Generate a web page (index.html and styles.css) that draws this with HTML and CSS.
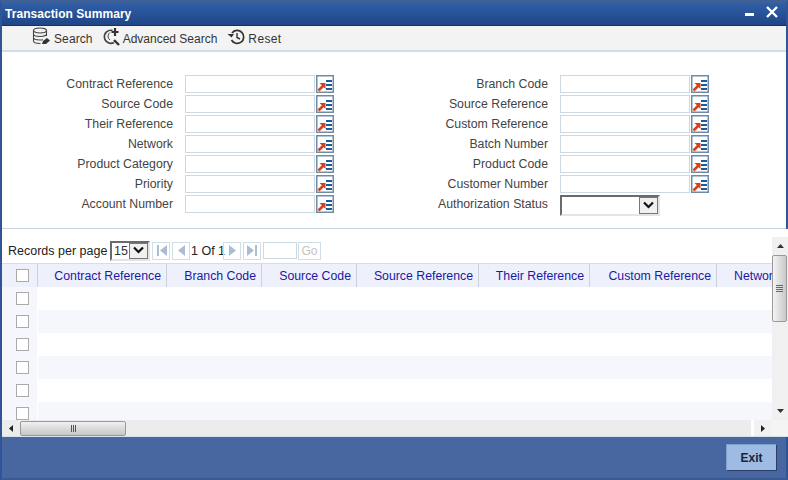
FILE: index.html
```html
<!DOCTYPE html>
<html lang="en">
<head>
<meta charset="utf-8">
<title>Transaction Summary</title>
<link rel="stylesheet" href="styles.css">
</head>
<body>
<svg class="defs" width="0" height="0">
  <symbol id="lov" viewBox="0 0 18 18">
    <rect x="0.750" y="0.750" width="16.500" height="16.500" fill="#fff" stroke="#6f8ca3" stroke-width="1.500"/>
    <path d="M2.500 15.500 L7.500 10.500" stroke="#d8401c" stroke-width="2.600"/>
    <path d="M3.500 8 H9.500 V14 Z" fill="#d8401c"/>
    <path d="M10 6h6M10 10h6M10 14h6" stroke="#1c5a9c" stroke-width="2.200"/>
  </symbol>
</svg>
<main class="window">
  <header class="titlebar">
    <h1 class="title">Transaction Summary</h1>
    <div class="winctl">
      <span class="minimize"></span>
      <svg class="close" width="12" height="12" viewBox="0 0 12 12"><path d="M1 1 L11 11 M11 1 L1 11" stroke="#fff" stroke-width="2.400"/></svg>
    </div>
  </header>
  <nav class="toolbar">
    <span class="tool tool-search">
      <svg width="19" height="20" viewBox="0 0 19 20"><g fill="none" stroke="#444" stroke-width="1.100"><ellipse cx="8" cy="3.500" rx="6.500" ry="2.500"/><path d="M1.500 3.500V14c0 1.500 3 2.500 7 2.500M14.500 3.500V9M1.500 7c0 1.500 3 2.500 6.500 2.500S14.500 8.500 14.500 7M1.500 10.500c0 1.500 3 2.500 6.500 2.500 1 0 2-.1 3-.3"/></g><path d="M10 17l1-3 4-3 3 2.500-4 3.500z" fill="#333"/></svg>
      Search
    </span>
    <span class="tool tool-adv">
      <svg width="18" height="20" viewBox="0 0 18 20"><g fill="none" stroke="#444"><path d="M9.500 3.500A6.500 6.500 0 1 0 11 15.500" stroke-width="1.600"/><path d="M7 5.500A4.500 4.500 0 0 0 7 13" stroke-width="1"/><path d="M11 13l5 5" stroke-width="2.400" stroke="#333"/><path d="M12 1v8M8.500 5h7" stroke-width="2.200" stroke="#333"/></g></svg>
      Advanced Search
    </span>
    <span class="tool tool-reset">
      <svg width="18" height="18" viewBox="0 0 18 18"><path d="M5 5A6.500 6.500 0 1 1 4.500 12" fill="none" stroke="#333" stroke-width="1.700"/><path d="M0.500 6H7L4.500 9.500z" fill="#333"/><path d="M10 5v4.500l3 1.500" fill="none" stroke="#333" stroke-width="1.400"/></svg>
      Reset
    </span>
  </nav>
  <form class="criteria">
    <div class="field"><label>Contract Reference</label><span class="input"></span><svg class="lov"><use href="#lov"/></svg></div>
    <div class="field"><label>Branch Code</label><span class="input"></span><svg class="lov"><use href="#lov"/></svg></div>
    <div class="field"><label>Source Code</label><span class="input"></span><svg class="lov"><use href="#lov"/></svg></div>
    <div class="field"><label>Source Reference</label><span class="input"></span><svg class="lov"><use href="#lov"/></svg></div>
    <div class="field"><label>Their Reference</label><span class="input"></span><svg class="lov"><use href="#lov"/></svg></div>
    <div class="field"><label>Custom Reference</label><span class="input"></span><svg class="lov"><use href="#lov"/></svg></div>
    <div class="field"><label>Network</label><span class="input"></span><svg class="lov"><use href="#lov"/></svg></div>
    <div class="field"><label>Batch Number</label><span class="input"></span><svg class="lov"><use href="#lov"/></svg></div>
    <div class="field"><label>Product Category</label><span class="input"></span><svg class="lov"><use href="#lov"/></svg></div>
    <div class="field"><label>Product Code</label><span class="input"></span><svg class="lov"><use href="#lov"/></svg></div>
    <div class="field"><label>Priority</label><span class="input"></span><svg class="lov"><use href="#lov"/></svg></div>
    <div class="field"><label>Customer Number</label><span class="input"></span><svg class="lov"><use href="#lov"/></svg></div>
    <div class="field"><label>Account Number</label><span class="input"></span><svg class="lov"><use href="#lov"/></svg></div>
    <div class="field"><label>Authorization Status</label>
      <span class="select"><span class="select-value"></span><span class="select-btn"><svg width="13" height="9" viewBox="0 0 13 9"><path d="M2 1.500l4.500 4.500L11 1.500" fill="none" stroke="#111" stroke-width="2.200"/></svg></span></span>
    </div>
  </form>
  <section class="results">
    <div class="results-main">
      <div class="pager">
        <span class="pager-label">Records per page</span>
        <span class="select select-small"><span class="select-value">15</span><span class="select-btn"><svg width="13" height="9" viewBox="0 0 13 9"><path d="M2 1.500l4.500 4.500L11 1.500" fill="none" stroke="#111" stroke-width="2.200"/></svg></span></span>
        <span class="page-btn"><svg width="13" height="13" viewBox="0 0 13 13"><path d="M2 1h2v11H2zM12 1v11L5 6.500z" fill="#a9bdd4"/></svg></span>
        <span class="page-btn"><svg width="13" height="13" viewBox="0 0 13 13"><path d="M10 1v11L3 6.500z" fill="#a9bdd4"/></svg></span>
        <span class="page-count">1 Of 1</span>
        <span class="page-btn"><svg width="13" height="13" viewBox="0 0 13 13"><path d="M3 1v11l7-5.500z" fill="#a9bdd4"/></svg></span>
        <span class="page-btn"><svg width="13" height="13" viewBox="0 0 13 13"><path d="M9 1h2v11H9zM1 1v11l7-5.500z" fill="#a9bdd4"/></svg></span>
        <span class="page-input"></span>
        <span class="go">Go</span>
      </div>
      <div class="grid">
        <div class="row head">
          <span class="cell-check"><i class="check"></i></span>
          <span class="th w1">Contract Reference</span>
          <span class="th w2">Branch Code</span>
          <span class="th w3">Source Code</span>
          <span class="th w4">Source Reference</span>
          <span class="th w5">Their Reference</span>
          <span class="th w6">Custom Reference</span>
          <span class="th w7">Network</span>
        </div>
        <div class="row"><span class="cell-check"><i class="check"></i></span></div>
        <div class="row alt"><span class="cell-check"><i class="check"></i></span></div>
        <div class="row"><span class="cell-check"><i class="check"></i></span></div>
        <div class="row alt"><span class="cell-check"><i class="check"></i></span></div>
        <div class="row"><span class="cell-check"><i class="check"></i></span></div>
        <div class="row alt"><span class="cell-check"><i class="check"></i></span></div>
      </div>
    </div>
    <div class="vscroll">
      <span class="arrow"><svg width="9" height="6" viewBox="0 0 9 6"><path d="M4.500 1L8 5H1z" fill="#333"/></svg></span>
      <span class="vthumb"><i></i><i></i><i></i><i></i></span>
      <span class="vtrack"></span>
      <span class="arrow"><svg width="9" height="6" viewBox="0 0 9 6"><path d="M1 1h7L4.500 5z" fill="#333"/></svg></span>
    </div>
  </section>
  <div class="hscroll">
    <span class="harrow"><svg width="6" height="9" viewBox="0 0 6 9"><path d="M5 1v7L1 4.500z" fill="#222"/></svg></span>
    <span class="hthumb"><i></i><i></i><i></i></span>
    <span class="htrack"></span>
    <span class="harrow harrow-end"><svg width="6" height="9" viewBox="0 0 6 9"><path d="M1 1v7l4-3.500z" fill="#222"/></svg></span>
    <span class="hcorner"></span>
  </div>
  <footer class="footer"><button class="exit" type="button">Exit</button></footer>
</main>
</body>
</html>
```
FILE: styles.css
```css
* { box-sizing: border-box; }
html, body { margin: 0; padding: 0; }
body { width: 788px; height: 480px; overflow: hidden; font-family: "Liberation Sans", Arial, sans-serif; font-size: 12px; color: #333; background: #4866a0; }
.defs { display: block; height: 0; }
.window { display: flex; flex-direction: column; width: 788px; height: 480px; border-left: 2px solid #2f5597; border-right: 2px solid #2f5597; border-bottom: 2px solid #3a5a94; border-top: 3px solid #3d6099; }
.titlebar { flex: none; height: 23px; display: flex; align-items: center; justify-content: space-between; padding: 0 8px 0 3px; background: linear-gradient(#2f5fa8, #1f4585); border-bottom: 1px solid #16315f; }
.title { margin: 0; font-size: 12px; font-weight: bold; color: #fff; letter-spacing: 0.05px; }
.winctl { display: flex; align-items: flex-start; gap: 12px; height: 20px; }
.minimize { width: 9px; height: 3px; background: #fff; margin-top: 9px; }
.close { margin-top: 2px; }
.toolbar { flex: none; height: 26px; display: flex; align-items: center; padding-left: 30px; background: #f3f3f3; border-bottom: 2px solid #d2dee6; }
.tool { display: flex; align-items: center; gap: 2px; font-size: 12px; color: #333; padding-top: 1px; }
.tool svg { margin-top: -3px; }
.tool-search { gap: 3px; letter-spacing: 0.1px; }
.tool-adv { margin-left: 10px; }
.tool-reset { margin-left: 10px; gap: 3px; letter-spacing: 0.35px; }
.criteria { flex: none; height: 177px; display: grid; grid-template-columns: 375px 1fr; grid-auto-rows: 20px; padding-top: 23px; background: #fff; border-bottom: 1px solid #c8d4e0; }
.field { display: flex; align-items: flex-start; height: 20px; }
.field label { flex: none; width: 171px; text-align: right; line-height: 18px; font-size: 12.300px; color: #444; }
.field .input { flex: none; width: 130px; height: 18px; margin-left: 12px; border: 1px solid #ccd8e2; background: #fff; }
.lov { flex: none; width: 18px; height: 18px; margin-left: 1px; }
.select { display: flex; width: 100px; height: 21px; margin-left: 12px; border: 2px solid #6b6b6b; border-right-color: #e4e4e4; border-bottom-color: #e4e4e4; background: #fff; }
.select-value { flex: 1; font-size: 12.500px; line-height: 17px; padding-left: 2px; }
.select-btn { flex: none; width: 19px; display: flex; align-items: center; justify-content: center; background: #f0f0f0; border: 1px solid #777; }
.results { flex: none; height: 191px; margin-right: -2px; display: flex; border-top: 8px solid #fff; background: #fff; }
.results-main { flex: none; width: 770px; height: 183px; overflow: hidden; }
.pager { height: 26px; display: flex; align-items: center; padding: 1px 0 0 6px; }
.pager-label { font-size: 12.500px; color: #222; width: 102px; flex: none; }
.select-small { width: 40px; height: 20px; margin: 0; flex: none; }
.select-small .select-btn { width: 19px; }
.select-small .select-value { line-height: 16px; padding-left: 2px; }
.page-btn { flex: none; display: flex; align-items: center; justify-content: center; width: 18px; height: 18px; margin-left: 2px; border: 1px solid #d2dee6; }
.page-count { flex: none; width: 33px; padding-left: 1px; white-space: nowrap; font-size: 12.500px; color: #222; }
.page-count + .page-btn { margin-left: 0; }
.page-input { flex: none; width: 34px; height: 17px; margin-left: 2px; border: 1px solid #ccd8e2; }
.go { flex: none; width: 23px; height: 18px; margin-left: 1px; border: 1px solid #d2dee6; text-align: center; line-height: 17px; color: #c4c4c4; }
.grid { display: flex; flex-direction: column; }
.row { display: flex; flex: none; height: 23px; width: 850px; }
.row.head { height: 24px; background: #eef0fb; border-top: 1px solid #d6dde6; }
.row.alt { background: #f5f7fc; }
.cell-check { flex: none; width: 36px; display: flex; align-items: center; padding-left: 14px; background: #f5f7fc; border-right: 1px solid #fff; }
.head .cell-check { background: #eef0fb; border-right: 1px solid #c9d2dc; }
.check { display: block; width: 13px; height: 13px; border: 1px solid #aaa; background: #fff; }
.th { flex: none; text-align: right; padding-right: 5px; line-height: 24px; font-size: 12.300px; color: #1a1aa6; border-right: 1px solid #c9d2dc; white-space: nowrap; }
.w1 { width: 129px; }
.w2 { width: 95px; }
.w3 { width: 95px; }
.w4 { width: 122px; }
.w5 { width: 111px; }
.w6 { width: 127px; }
.w7 { width: 60px; padding-right: 0; text-align: left; padding-left: 17px; border-right: 0; }
.vscroll { flex: none; width: 16px; height: 183px; display: flex; flex-direction: column; background: #f0f0f0; }
.arrow { flex: none; height: 18px; display: flex; align-items: center; justify-content: center; }
.vthumb { flex: none; height: 67px; margin-right: 1px; border: 1px solid #999; border-radius: 2px; background: linear-gradient(90deg, #f4f4f4, #c8c8c8); display: flex; flex-direction: column; align-items: center; justify-content: center; gap: 1px; }
.vthumb i { display: block; width: 7px; height: 1px; background: #666; }
.vtrack { flex: 1; }
.hscroll { flex: none; height: 17px; margin-right: -2px; display: flex; align-items: center; background: #ececec; border-bottom: 1px solid #d8e2ea; }
.harrow { flex: none; width: 18px; display: flex; justify-content: center; }
.hthumb { flex: none; width: 106px; height: 15px; display: flex; align-items: center; justify-content: center; gap: 1px; border: 1px solid #999; border-radius: 2px; background: linear-gradient(#f0f0f0, #c6c6c6); }
.hthumb i { display: block; width: 1px; height: 7px; background: #555; }
.htrack { flex: 1; }
.harrow-end { height: 16px; width: 20px; align-items: center; background: #f1f1f1; border-left: 3px solid #fff; }
.hcorner { flex: none; width: 17px; height: 16px; background: #f4f4f4; }
.footer { flex: 1; display: flex; justify-content: flex-end; align-items: flex-start; padding: 7px 9px 0 0; background: #4866a0; }
.exit { width: 51px; height: 27px; padding: 0; font-family: inherit; font-size: 12px; font-weight: bold; color: #1e2433; background: #9dbbe3; border: 1px solid; border-color: #7f9fcc #2c3f66 #2c3f66 #7f9fcc; }
```
